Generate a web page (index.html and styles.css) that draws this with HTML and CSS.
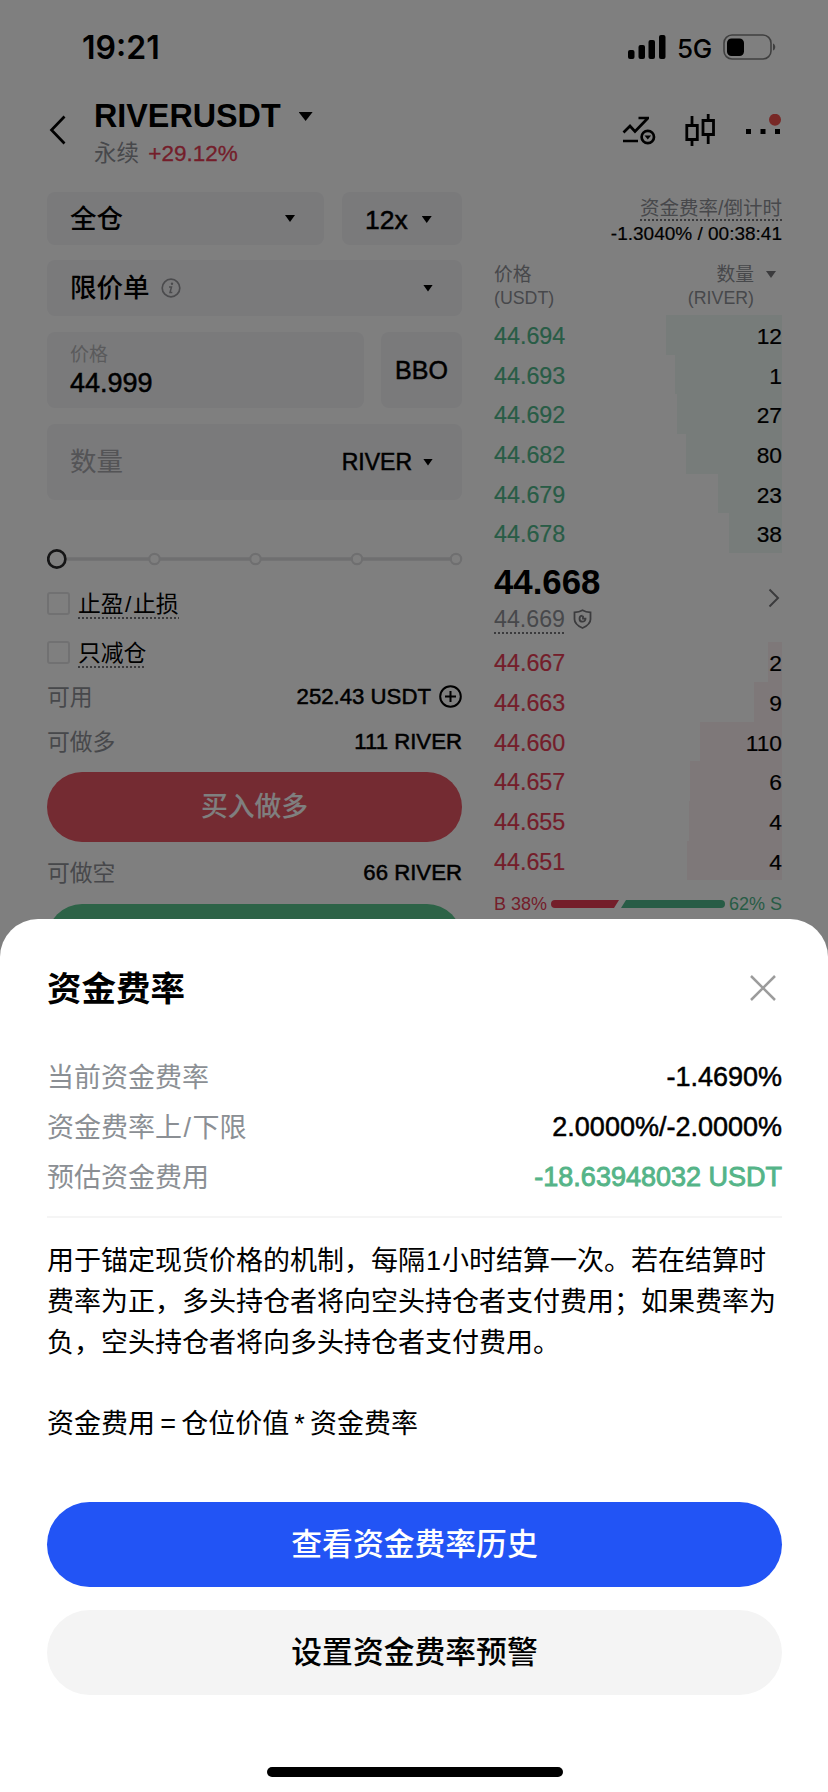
FILE: index.html
```html
<!DOCTYPE html>
<html lang="zh-CN">
<head>
<meta charset="utf-8">
<title>RIVERUSDT 永续</title>
<link rel="stylesheet" href="styles.css">
</head>
<body>
<div class="screen">
  <div class="status">
    <span class="clock">19:21</span>
    <div class="status-right">
      <svg class="signal" width="38" height="24" viewBox="0 0 38 24"><rect x="0" y="15" width="6.500" height="9" rx="2"/><rect x="10.500" y="10" width="6.500" height="14" rx="2"/><rect x="20.500" y="5" width="6.500" height="19" rx="2"/><rect x="31" y="0" width="6.500" height="24" rx="2"/></svg>
      <span class="net">5G</span>
      <svg class="battery" width="54" height="26" viewBox="0 0 54 26"><rect x="1" y="1" width="47" height="24" rx="8" fill="none" stroke="#000" stroke-opacity=".5" stroke-width="1.600"/><rect x="4" y="4.500" width="17" height="17.500" rx="4.500"/><path d="M50 9.500c3 1 3 6 0 7z" opacity=".5"/></svg>
    </div>
  </div>

  <header class="header">
    <svg class="back" width="18" height="30" viewBox="0 0 18 30"><path d="M15.500 1.500 2.500 15l13 13.500" fill="none" stroke="#000" stroke-width="2.700"/></svg>
    <div class="pair">
      <div class="pair-name">RIVERUSDT<i class="caret caret-lg"></i></div>
      <div class="pair-sub">永续 <span class="up pct">+29.12%</span></div>
    </div>
    <div class="tools">
      <svg width="34" height="30" viewBox="0 0 34 30" fill="none" stroke="#000" stroke-width="2.700"><path d="M1.500 17.500 8 11l5 5.500L25.500 3.500M16.500 3H27M1 26h15"/><circle cx="25.800" cy="22" r="6.200"/><path d="M22.500 20.500h6.600l-3.300 4z" fill="#000" stroke="none"/></svg>
      <svg width="30" height="32" viewBox="0 0 30 32" fill="none" stroke="#000" stroke-width="2.800"><path d="M1.800 11.500h10.500v14h-10.500zM18 6.500h10.500v14H18zM7 2v9.500M7 25.500v6.500M23.200 0v6.500M23.200 20.500v9.500"/></svg>
      <svg width="38" height="32" viewBox="0 0 38 32"><path d="M2 15h5v5H2zM16.500 15h5v5h-5zM31 15h5v5h-5z"/><circle cx="31" cy="5.800" r="6" fill="#f0504c"/></svg>
    </div>
  </header>

  <main class="trade">
    <section class="form">
      <div class="row gap18">
        <div class="box box-sm grow">全仓<i class="caret mr"></i></div>
        <div class="box box-sm lever medium">12x<i class="caret"></i></div>
      </div>
      <div class="box box-md">限价单<svg class="info" width="20" height="20" viewBox="0 0 20 20"><circle cx="10" cy="10" r="8.800" fill="none" stroke="#97979b" stroke-width="1.700"/><path d="M8 9h2.500L9 14.500h2.300" fill="none" stroke="#97979b" stroke-width="1.500"/><circle cx="11" cy="5.800" r="1.200" fill="#97979b"/></svg><i class="caret mr"></i></div>
      <div class="row gap17">
        <div class="box box-lg grow price"><span class="hint">价格</span><span class="val medium">44.999</span></div>
        <div class="box box-lg bbo medium">BBO</div>
      </div>
      <div class="box box-lg amount"><span class="ph">数量</span><span class="unit medium">RIVER<i class="caret"></i></span></div>
      <svg class="slider" width="416" height="20" viewBox="0 0 416 20"><path d="M20 10h388" stroke="#dfdfe1" stroke-width="3.500"/><g fill="#fff" stroke="#dfdfe1" stroke-width="2.200"><circle cx="107.500" cy="10" r="5.200"/><circle cx="208.500" cy="10" r="5.200"/><circle cx="310" cy="10" r="5.200"/><circle cx="409" cy="10" r="5.200"/></g><circle cx="9.800" cy="10" r="8.600" fill="#fff" stroke="#2b2b2d" stroke-width="2.700"/></svg>
      <label class="check"><i class="tick"></i><span class="dotted">止盈<i class="slash">/</i>止损</span></label>
      <label class="check"><i class="tick"></i><span class="dotted">只减仓</span></label>
      <div class="kv avail"><span>可用</span><b class="medium">252.43 USDT<svg width="23" height="23" viewBox="0 0 23 23"><g fill="none" stroke="#000" stroke-width="2"><circle cx="11.500" cy="11.500" r="10.300"/><path d="M6 11.500h11M11.500 6v11"/></g></svg></b></div>
      <div class="kv"><span>可做多</span><b class="medium">111 RIVER</b></div>
      <div class="btn-long">买入做多</div>
      <div class="kv short"><span>可做空</span><b class="medium">66 RIVER</b></div>
      <div class="btn-short"></div>
    </section>

    <section class="book">
      <div class="fund"><span class="dotted">资金费率/倒计时</span></div>
      <div class="count">-1.3040% / 00:38:41</div>
      <div class="cols"><div>价格<br><small>(USDT)</small></div><div class="cols-r"><div>数量<br><small>(RIVER)</small></div><i class="caret gray"></i></div></div>
      <div class="level sell"><span>44.694</span><em style="width:116px">12</em></div>
      <div class="level sell"><span>44.693</span><em style="width:107px">1</em></div>
      <div class="level sell"><span>44.692</span><em style="width:105px">27</em></div>
      <div class="level sell"><span>44.682</span><em style="width:96px">80</em></div>
      <div class="level sell"><span>44.679</span><em style="width:64px">23</em></div>
      <div class="level sell"><span>44.678</span><em style="width:53px">38</em></div>
      <div class="last">
        <div>
          <div class="last-price">44.668</div>
          <div class="mark"><span class="dotted">44.669</span><svg width="19" height="20" viewBox="0 0 19 20" fill="none" stroke="#77777b" stroke-width="1.800"><path d="M9.500 1.200c2.500 1.500 5 2 8 2.100v7c0 4-3.500 6.700-8 8.700-4.500-2-8-4.700-8-8.700v-7c3-.1 5.500-.6 8-2.100z"/><path d="M9.500 6.700A3 3 0 1 0 12.500 9.700H10V6.700"/></svg></div>
        </div>
        <svg class="next" width="12" height="20" viewBox="0 0 12 20"><path d="M1.500 1.500 10 10l-8.500 8.500" fill="none" stroke="#77777b" stroke-width="2"/></svg>
      </div>
      <div class="level buy"><span>44.667</span><em style="width:14px">2</em></div>
      <div class="level buy"><span>44.663</span><em style="width:28px">9</em></div>
      <div class="level buy"><span>44.660</span><em style="width:82px">110</em></div>
      <div class="level buy"><span>44.657</span><em style="width:92px">6</em></div>
      <div class="level buy"><span>44.655</span><em style="width:93px">4</em></div>
      <div class="level buy"><span>44.651</span><em style="width:95px">4</em></div>
      <div class="ratio"><span class="up">B 38%</span><svg width="174" height="8" viewBox="0 0 174 8"><path d="M4 0h64l-5 8H4a4 4 0 0 1 0-8z" fill="#e83c55"/><path d="M75 0h95a4 4 0 0 1 0 8H70z" fill="#50b98c"/></svg><span class="down">62% S</span></div>
    </section>
  </main>

  <div class="scrim"></div>

  <section class="sheet">
    <div class="sheet-head"><h2>资金费率</h2><svg width="28" height="28" viewBox="0 0 28 28"><path d="m2 2 24 24M26 2 2 26" stroke="#9c9c9c" stroke-width="2.500"/></svg></div>
    <div class="facts">
      <div><span>当前资金费率</span><b class="medium">-1.4690%</b></div>
      <div><span>资金费率上<i class="slash">/</i>下限</span><b class="medium">2.0000%/-2.0000%</b></div>
      <div><span>预估资金费用</span><b class="medium gain">-18.63948032 USDT</b></div>
    </div>
    <p class="desc">用于锚定现货价格的机制，每隔<span class="one">1</span>小时结算一次。若在结算时<br>费率为正，多头持仓者将向空头持仓者支付费用；如果费率为<br>负，空头持仓者将向多头持仓者支付费用。<br><br><span class="formula">资金费用 = 仓位价值 * 资金费率</span></p>
    <div class="cta primary">查看资金费率历史</div>
    <div class="cta">设置资金费率预警</div>
    <div class="home"></div>
  </section>
</div>
</body>
</html>
```
FILE: styles.css
```css
* { box-sizing: border-box; }
body { margin: 0; background: #fff; }
.screen {
  position: relative;
  width: 828px;
  height: 1792px;
  overflow: hidden;
  background: #fff;
  color: #000;
  font-family: "Liberation Sans", "Noto Sans CJK SC", sans-serif;
  white-space: nowrap;
}
i, em { font-style: normal; }
b { font-weight: 500; }
small { font-size: 17.800px; }
.medium { font-weight: 500; -webkit-text-stroke: .5px currentColor; }
.slash { padding: 0 1.500px; }

.status { height: 94px; padding: 0 51px 0 82px; display: flex; justify-content: space-between; align-items: center; font-family: Inter, sans-serif; }
.clock { font-size: 32px; font-weight: 600; padding-top: 1px; }
.status-right { display: flex; align-items: center; }
.net { font-size: 26px; font-weight: 500; margin: 2px 11px 0 11px; letter-spacing: -.3px; }

.header { height: 98px; padding: 0 46px 0 49px; display: flex; align-items: flex-start; }
.back { margin-top: 21px; }
.pair { margin-left: 27px; padding-top: 1px; }
.pair-name { height: 43px; line-height: 43px; font-size: 32.300px; font-weight: 700; display: flex; align-items: center; }
.pair-sub { height: 32px; line-height: 32px; font-size: 22.500px; color: #8f9197; }
.pct { margin-left: 3px; -webkit-text-stroke: .3px currentColor; }
.up { color: #e83c55; }
.down { color: #50b98c; }
.tools { margin: 20px 0 0 auto; display: flex; align-items: center; gap: 29px; }

.caret { width: 10px; height: 7px; background: #000; clip-path: polygon(0 0, 100% 0, 50% 100%); display: inline-block; flex: none; }
.caret-lg { width: 14px; height: 9px; margin-left: 18px; }
.gray { background: #77777b; }
.mr { margin-left: auto; }

.trade { padding: 0 46px 0 47px; display: flex; align-items: flex-start; gap: 32px; }
.form { width: 415px; display: flex; flex-direction: column; }
.row { display: flex; }
.gap18 { gap: 18px; }
.gap17 { gap: 17px; }
.grow { flex: 1; }
.box { background: #f4f4f7; border-radius: 8px; padding: 0 29px 0 23px; font-size: 26.500px; font-weight: 500; line-height: 36px; display: flex; align-items: center; }
.box-sm { height: 53px; }
.box-md { height: 56px; margin: 15px 0 16px; }
.box-lg { height: 76px; }
.lever { width: 120px; padding-top: 2px; font-size: 26.500px; gap: 14px; }
.info { margin-left: 11px; }
.price { flex-direction: column; align-items: flex-start; justify-content: center; }
.hint { font-size: 19px; line-height: 26px; color: #b4b4b8; font-weight: 400; }
.val { font-size: 27px; line-height: 31px; }
.bbo { width: 81px; padding: 0; justify-content: center; font-size: 25px; }
.amount { margin-top: 16px; justify-content: space-between; }
.ph { color: #a8a8ad; font-weight: 400; }
.unit { font-size: 23px; display: flex; align-items: center; gap: 11px; }
.slider { margin: 49px 0 10px; }
.check { height: 49px; display: flex; align-items: center; gap: 8px; font-size: 22.800px; }
.tick { width: 23px; height: 23px; border: 2px solid #e2e2e4; border-radius: 3px; }
.dotted { background: repeating-linear-gradient(90deg, #77777b 0 2px, transparent 2px 4px) left bottom / 100% 2px no-repeat; line-height: 30px; }
.kv { height: 45px; display: flex; align-items: center; justify-content: space-between; font-size: 22.800px; }
.kv span { color: #8f9197; margin-top: -1px; }
.kv b { display: flex; align-items: center; gap: 8px; font-size: 22.200px; padding-top: 2px; }
.avail { margin-top: -4px; }
.btn-long, .btn-short { height: 70px; border-radius: 35px; }
.btn-long { margin-top: 9px; background: #e85664; color: #fff; font-size: 26.800px; font-weight: 500; line-height: 70px; text-align: center; }
.short { margin: 7px 0 10px; }
.btn-short { background: #5ac68e; }

.book { flex: 1; min-width: 0; }
.fund { height: 29px; margin-top: 3px; text-align: right; font-size: 19.500px; color: #8f9197; line-height: 26px; }
.fund .dotted { line-height: 25px; display: inline-block; }
.count { height: 24px; line-height: 20px; text-align: right; font-size: 19px; -webkit-text-stroke: .2px #000; }
.cols { height: 67px; padding: 15px 0 0; display: flex; justify-content: space-between; font-size: 18.800px; line-height: 23px; color: #8f9197; }
.cols-r { display: flex; gap: 12px; text-align: right; padding-right: 6px; }
.cols-r .caret { margin-top: 8px; }
.level { height: 39.700px; line-height: 43px; display: flex; justify-content: space-between; font-size: 23.300px; -webkit-text-stroke: .2px currentColor; }
.level em { display: flex; justify-content: flex-end; font-size: 22.800px; }
.sell span { color: #50b98c; }
.sell em { background: #eef8f5; }
.buy span { color: #e83c55; }
.buy em { background: #fdf0f3; }
.last { height: 89px; padding-top: 7px; display: flex; justify-content: space-between; }
.last-price { font-size: 34.800px; line-height: 44px; font-weight: 700; }
.mark { display: flex; align-items: center; gap: 8px; font-size: 23.200px; color: #8f9197; }
.mark .dotted { line-height: 30px; }
.next { margin: 28px 2px 0 0; }
.ratio { margin-top: 10px; height: 28px; display: flex; align-items: center; justify-content: space-between; font-size: 18px; }

.scrim { position: absolute; inset: 0; background: rgba(0, 0, 0, .5); }
.sheet { position: absolute; left: 0; right: 0; bottom: 0; height: 873px; padding: 0 46px 0 47px; background: #fff; border-radius: 38px 38px 0 0; }
.sheet-head { height: 132px; padding: 6px 5px 0 0; display: flex; align-items: center; justify-content: space-between; }
.sheet-head h2 { margin: -5px 0 0; font-size: 34.500px; font-weight: 700; }
.facts { height: 167px; border-bottom: 2px solid #f5f5f5; }
.facts div { height: 50px; display: flex; align-items: center; justify-content: space-between; font-size: 27px; }
.facts span { color: #8b8f94; margin-top: -2px; }
.facts b { padding-top: 2px; }
.facts .gain { color: #55b488; -webkit-text-stroke-width: .9px; }
.desc { margin: 23px 0 0; font-size: 27px; line-height: 40.800px; height: 261px; }
.one { padding: 0 1px; }
.formula { word-spacing: -2.300px; }
.cta { height: 85px; border-radius: 43px; background: #f4f4f4; font-size: 30.800px; font-weight: 500; line-height: 86px; text-align: center; }
.primary { background: #2254f5; color: #fff; margin-bottom: 23px; }
.home { width: 296px; height: 10px; margin: 72px auto 0; border-radius: 5px; background: #000; }
```
